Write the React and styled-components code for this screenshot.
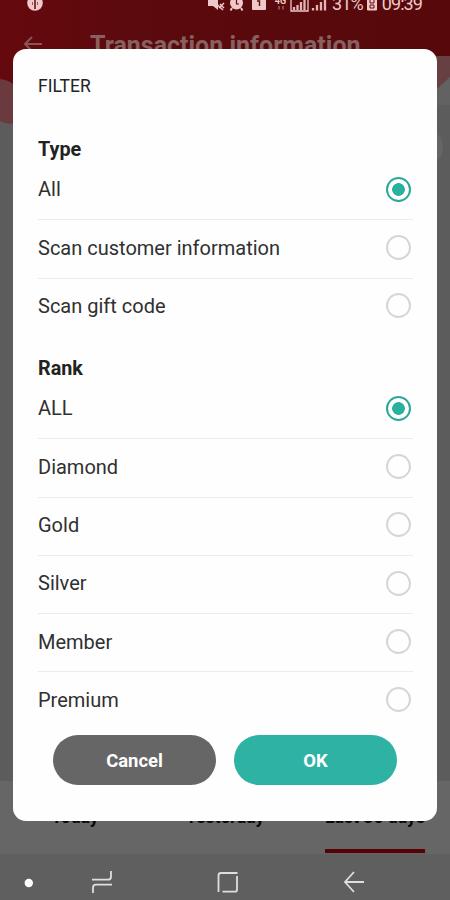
import React, { useState } from "react";
import styled, { createGlobalStyle } from "styled-components";

const filterGroups = [
  {
    name: "Type",
    options: ["All", "Scan customer information", "Scan gift code"],
  },
  {
    name: "Rank",
    options: ["ALL", "Diamond", "Gold", "Silver", "Member", "Premium"],
  },
];

const tabs = ["Today", "Yesterday", "Last 30 days"];

const StatusBar = () => (
  <StatusRow>
    <svg className="app" width="16" height="16" viewBox="0 0 16 16">
      <circle cx="8" cy="3" r="7.8" fill="#efc9ca" />
      <path d="M8 0V9" stroke="#65090e" strokeWidth="1.5" />
      <path d="M5.5 2V5M10.5 2V5" fill="none" stroke="#a2555a" />
    </svg>
    <svg className="mute" width="17" height="16" viewBox="0 0 17 16" fill="#efc9ca">
      <path d="M0 0H5L10 -4V10L5 6H0Z" />
      <path d="M2 -2L15 10M12 4L16 8M16 3L11 8" stroke="#efc9ca" strokeWidth="1.5" />
    </svg>
    <svg className="alarm" width="15" height="16" viewBox="0 0 15 16">
      <circle cx="7.5" cy="3" r="6.5" fill="#efc9ca" />
      <path d="M7.5 0V4H10" stroke="#65090e" strokeWidth="1.2" fill="none" />
      <path d="M3 8L1.5 10.5M12 8L13.5 10.5" stroke="#efc9ca" strokeWidth="2" />
    </svg>
    <svg className="card" width="14" height="16" viewBox="0 0 14 16">
      <rect x="0" y="-5" width="14" height="15" rx="1" fill="#efc9ca" />
      <path d="M5 1H7.5V6" stroke="#65090e" strokeWidth="1.4" fill="none" />
    </svg>
    <NetLabel>
      <b>4G</b>
      <svg width="8" height="5" viewBox="0 0 8 5">
        <path d="M2 0V3.5M6 0V3.5" stroke="#a66064" strokeWidth="1.5" />
      </svg>
    </NetLabel>
    <svg className="signal" width="38" height="16" viewBox="0 0 38 16">
      <path d="M1 -1V11H18V-1" stroke="#efc9ca" strokeWidth="1.3" fill="none" />
      <path d="M4 7V10M7.5 5V10M11 2V10M14.5 -1V10M23 8V10.5M27 5V10.5M31 2V10.5M35 -1V10.5" stroke="#e2b4b6" strokeWidth="2.3" />
    </svg>
    <StatusText $left={4}>31%</StatusText>
    <svg className="battery" width="10" height="16" viewBox="0 0 10 16">
      <rect x="0" y="-4" width="10" height="14.5" rx="1" fill="#efc9ca" />
      <path d="M3 0V3H7V0M3 5H7V8H3Z" stroke="#65090e" fill="none" />
    </svg>
    <StatusText $left={5}>09:39</StatusText>
  </StatusRow>
);

const App = () => {
  const [selected, setSelected] = useState({ Type: "All", Rank: "ALL" });

  return (
    <Screen>
      <GlobalStyle />
      <Header>
        <StatusBar />
        <TitleRow>
          <svg width="19" height="16" viewBox="0 0 19 16">
            <path d="M8 1L1 8L8 15M1 8H18" fill="none" stroke="#8a5354" strokeWidth="2" />
          </svg>
          <h1>Transaction information</h1>
        </TitleRow>
      </Header>
      <Backdrop>
        <svg width="450" height="105" viewBox="0 0 450 105">
          <path d="M0 0H14V58Q8 60 0 56Z" fill="#6a3a3e" />
          <path d="M0 0H14V20Q9 15 0 14Z" fill="#64090f" />
          <path d="M436 -9H450V12L436 27Z" fill="#674044" />
          <path d="M450 12L436 25V40H450Z" fill="#636262" />
          <path d="M436 68Q443 72 443 82Q443 92 436 96Z" fill="#656565" />
        </svg>
      </Backdrop>
      <TabBar>
        {tabs.map((tab, i) => (
          <Tab key={tab} $active={i === 2}>
            {tab}
          </Tab>
        ))}
      </TabBar>
      <SystemNav>
        <svg width="450" height="46" viewBox="0 0 450 46" fill="none" stroke="#dedede" strokeWidth="1.8">
          <circle cx="28.8" cy="29" r="4.2" fill="#fff" stroke="none" />
          <path d="M92 25.7H108Q111 25.7 111 22.7V17M112 30.7H96Q93 30.7 93 33.7V39" />
          <path d="M218.5 38V21.5Q218.5 19 221 19H237.5M222.5 37.7H235Q237 37.7 237 35.7V22" />
          <path d="M354 18L345 28L354 38M345 28H364" />
        </svg>
      </SystemNav>

      <Dialog>
        <DialogTitle>FILTER</DialogTitle>
        {filterGroups.map((group) => (
          <Group key={group.name}>
            <GroupTitle>{group.name}</GroupTitle>
            {group.options.map((option) => (
              <Option
                key={option}
                onClick={() => setSelected({ ...selected, [group.name]: option })}
              >
                <span>{option}</span>
                <Radio $checked={selected[group.name] === option} />
              </Option>
            ))}
          </Group>
        ))}
        <Actions>
          <Button $color="#666666">Cancel</Button>
          <Button $color="#2eb2a4">OK</Button>
        </Actions>
      </Dialog>
    </Screen>
  );
};

const GlobalStyle = createGlobalStyle`
  * {
    box-sizing: border-box;
  }
  body {
    margin: 0;
    font-family: Roboto, sans-serif;
  }
`;

const Screen = styled.div`
  position: relative;
  display: flex;
  flex-direction: column;
  width: 450px;
  height: 900px;
  overflow: hidden;
  background-color: #5c5c5c;
`;

const Header = styled.header`
  height: 65px;
  background: linear-gradient(to right, #65090e, #5a0a0d 35%, #57080b);
`;

const StatusRow = styled.div`
  display: flex;
  height: 16px;
  padding-left: 27px;
  svg {
    flex-shrink: 0;
  }
  .mute {
    margin-left: 165px;
  }
  .alarm {
    margin-left: 4px;
  }
  .card {
    margin-left: 8px;
  }
  .signal {
    margin-left: 3px;
  }
  .battery {
    margin-left: 4px;
  }
`;

const NetLabel = styled.div`
  display: flex;
  flex-direction: column;
  align-items: center;
  width: 13px;
  margin-left: 8px;
  color: #efc9ca;
  b {
    height: 5px;
    font-size: 9px;
    line-height: 3px;
    margin-bottom: 1px;
  }
`;

const StatusText = styled.span`
  margin-left: ${(props) => props.$left}px;
  margin-top: -6px;
  color: #efc9ca;
  font-size: 18px;
  line-height: 20px;
  letter-spacing: -0.9px;
  white-space: nowrap;
`;

const TitleRow = styled.div`
  display: flex;
  align-items: flex-start;
  padding: 18px 0 0 24px;
  svg {
    margin-top: 2px;
  }
  h1 {
    margin: -3px 0 0 47px;
    color: #876061;
    font-size: 25px;
    line-height: 30px;
    font-weight: 700;
    white-space: nowrap;
  }
`;

const Backdrop = styled.div`
  flex: 1;
  svg {
    display: block;
    overflow: visible;
  }
`;

const TabBar = styled.div`
  display: flex;
  justify-content: space-around;
  height: 73px;
  background-color: #666666;
`;

const Tab = styled.div`
  height: 72px;
  width: 100px;
  padding-top: 25px;
  color: #080808;
  font-size: 17.6px;
  line-height: 22px;
  font-weight: 700;
  text-align: center;
  white-space: nowrap;
  border-bottom: 4px solid ${(props) => (props.$active ? "#570207" : "transparent")};
`;

const SystemNav = styled.div`
  height: 46px;
  background-color: #5f5f5f;
  svg {
    display: block;
  }
`;

const Dialog = styled.div`
  position: absolute;
  top: 49px;
  left: 13px;
  width: 424px;
  height: 772px;
  padding: 26px 24px 0 25px;
  border-radius: 13px;
  background-color: #fefefe;
  color: #222222;
`;

const DialogTitle = styled.div`
  height: 22px;
  font-size: 17.5px;
  line-height: 22px;
`;

const Group = styled.section`
  height: 219px;
  padding-top: 40px;
  & + & {
    height: 394px;
  }
`;

const GroupTitle = styled.h2`
  height: 25px;
  margin: 0;
  font-size: 19.8px;
  line-height: 26px;
  font-weight: 700;
`;

const Option = styled.div`
  display: flex;
  align-items: center;
  justify-content: space-between;
  height: 58.3px;
  padding: 0 2.5px 2.6px 0;
  border-bottom: 1.5px solid #ebebeb;
  font-size: 20px;
  color: #303030;
  cursor: pointer;
  &:last-child {
    border-bottom-color: transparent;
  }
`;

const Radio = styled.span`
  width: 25px;
  height: 25px;
  border-radius: 50%;
  border: 2px solid ${(props) => (props.$checked ? "#2aa899" : "#d6d6d6")};
  background: ${(props) =>
    props.$checked ? "radial-gradient(circle, #2ab09f 6px, transparent 6.7px)" : "none"};
`;

const Actions = styled.div`
  display: flex;
  gap: 18px;
  padding: 25px 15px 0;
`;

const Button = styled.button`
  width: 163px;
  height: 50px;
  padding: 0;
  border: none;
  border-radius: 25px;
  background-color: ${(props) => props.$color};
  color: #ffffff;
  font-family: inherit;
  font-size: 18.4px;
  font-weight: 700;
`;

export default App;
